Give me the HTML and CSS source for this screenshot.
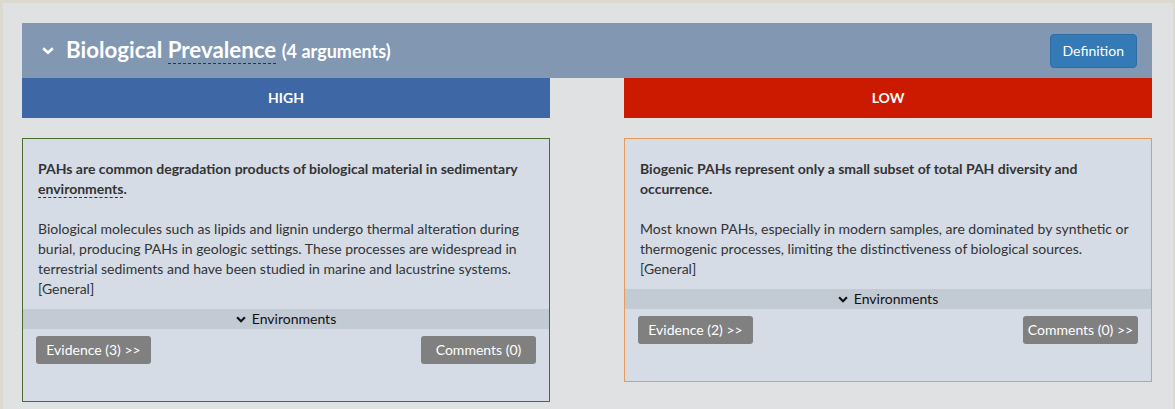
FILE: index.html
```html
<!DOCTYPE html>
<html lang="en">
<head>
<meta charset="utf-8">
<title>Biological Prevalence</title>
<link rel="stylesheet" href="styles.css">
</head>
<body>
<div class="panel">
  <div class="section-head">
    <div class="head-title">
      <svg class="head-chev" viewBox="0 0 12 8" width="12" height="8" aria-hidden="true"><path d="M1.2 1.2 L6 5.8 L10.8 1.2" fill="none" stroke="#fff" stroke-width="2.6" stroke-linejoin="miter"/></svg>
      <h3 class="title">Biological <abbr class="term">Prevalence</abbr> <small class="count">(4 arguments)</small></h3>
    </div>
    <button class="btn-def">Definition</button>
  </div>
  <div class="columns">
    <div class="col">
      <div class="tier tier-high">HIGH</div>
      <div class="card card-high">
        <div class="card-body">
          <p class="arg-title">PAHs are common degradation products of biological material in sedimentary <abbr class="term-dark">environments</abbr>.</p>
          <p class="arg-desc">Biological molecules such as lipids and lignin undergo thermal alteration during burial, producing PAHs in geologic settings. These processes are widespread in terrestrial sediments and have been studied in marine and lacustrine systems. [General]</p>
        </div>
        <div class="env">
          <svg class="env-chev" viewBox="0 0 10 7" width="10" height="7" aria-hidden="true"><path d="M1.1 1.3 L5 5.2 L8.9 1.3" fill="none" stroke="#111" stroke-width="2.2"/></svg>
          <span>Environments</span>
        </div>
        <div class="actions">
          <button class="btn-grey">Evidence (3) &gt;&gt;</button>
          <button class="btn-grey">Comments (0)</button>
        </div>
      </div>
    </div>
    <div class="col">
      <div class="tier tier-low">LOW</div>
      <div class="card card-low">
        <div class="card-body">
          <p class="arg-title">Biogenic PAHs represent only a small subset of total PAH diversity and occurrence.</p>
          <p class="arg-desc">Most known PAHs, especially in modern samples, are dominated by synthetic or thermogenic processes, limiting the distinctiveness of biological sources. [General]</p>
        </div>
        <div class="env">
          <svg class="env-chev" viewBox="0 0 10 7" width="10" height="7" aria-hidden="true"><path d="M1.1 1.3 L5 5.2 L8.9 1.3" fill="none" stroke="#111" stroke-width="2.2"/></svg>
          <span>Environments</span>
        </div>
        <div class="actions">
          <button class="btn-grey">Evidence (2) &gt;&gt;</button>
          <button class="btn-grey">Comments (0) &gt;&gt;</button>
        </div>
      </div>
    </div>
  </div>
</div>
</body>
</html>
```
FILE: styles.css
```css
* { box-sizing: border-box; }
html, body { margin: 0; padding: 0; }
body {
  background: #dcd9cf;
  font-family: Lato, "Open Sans", "Liberation Sans", sans-serif;
  font-size: 14px;
  line-height: 20px;
  color: #333;
}
.panel {
  margin: 3px 2px 0 3px;
  background: #e0e1e2;
  padding: 20px 21px 10px 19px;
  min-height: 406px;
}
.section-head {
  height: 55px;
  background: #8197b2;
  display: flex;
  align-items: center;
  justify-content: space-between;
  padding: 0 15px 0 20px;
}
.head-title {
  display: flex;
  align-items: center;
}
.head-chev { margin-right: 12px; margin-top: 1px; }
.title {
  margin: 0;
  color: #fff;
  font-size: 22.3px;
  font-weight: 700;
  line-height: 28px;
}
.term {
  text-decoration: none;
  border-bottom: 1px dashed #333;
}
.count {
  font-size: 18px;
  font-weight: 700;
}
.btn-def {
  font-family: inherit;
  font-size: 14px;
  line-height: 20px;
  padding: 6px 12px;
  color: #fff;
  background: #337ab7;
  border: 1px solid #2e6da4;
  border-radius: 4px;
}
.columns {
  display: grid;
  grid-template-columns: 1fr 1fr;
  column-gap: 74px;
  align-items: start;
}
.tier {
  height: 40px;
  display: flex;
  align-items: center;
  justify-content: center;
  color: #fff;
  font-weight: 700;
  font-size: 14px;
}
.tier-high { background: #3d67a5; }
.tier-low { background: #cc1a00; }
.card {
  margin-top: 20px;
  background: #d5dce6;
  border: 1px solid #4a6e2a;
}
.card-low { border-color: #e89a5c; }
.card-body { padding: 20px 15px 0 15px; }
.arg-title {
  margin: 0 0 20px;
  font-weight: 700;
}
.term-dark {
  text-decoration: none;
  border-bottom: 1px dashed #333;
}
.arg-desc { margin: 0 0 10px; }
.env {
  height: 20px;
  background: #c2cad4;
  display: flex;
  align-items: center;
  justify-content: center;
  color: #111;
}
.env-chev { margin-right: 6px; }
.actions {
  display: flex;
  justify-content: space-between;
  padding: 7px 13px 37px;
}
.btn-grey {
  font-family: inherit;
  font-size: 14px;
  line-height: 20px;
  width: 115px;
  padding: 4px 0;
  text-align: center;
  color: #fff;
  background: #808080;
  border: 0;
  border-radius: 3px;
  white-space: nowrap;
}
```
